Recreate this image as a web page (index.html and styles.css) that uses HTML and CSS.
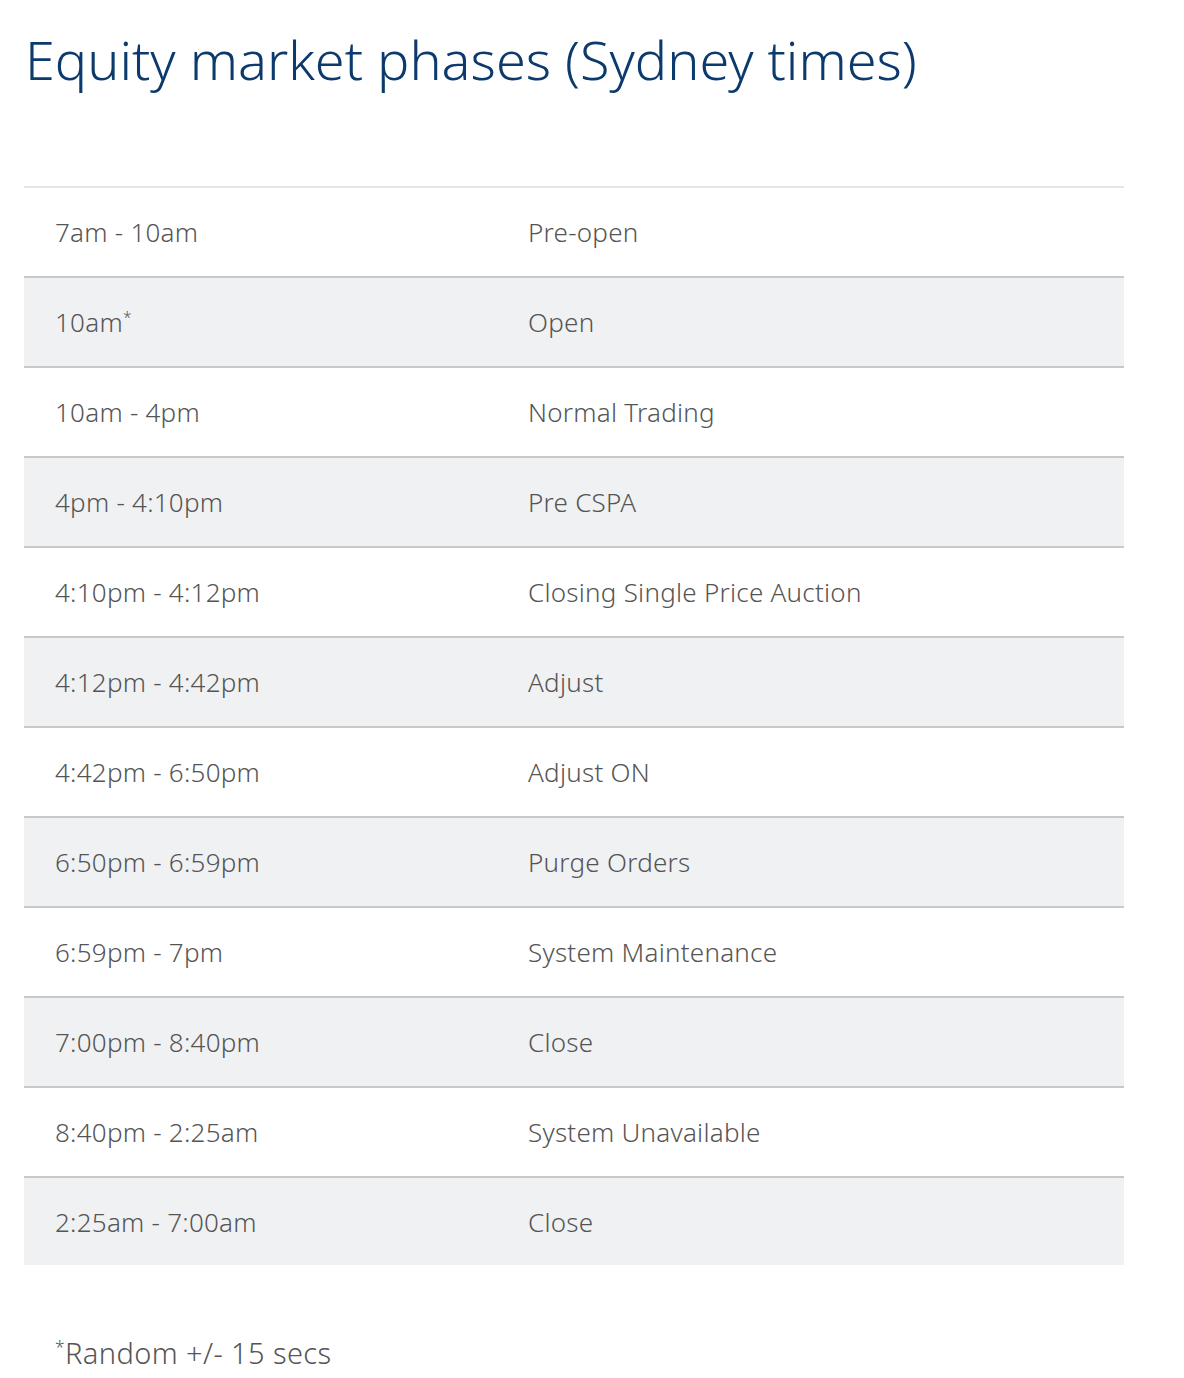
FILE: index.html
```html
<!DOCTYPE html>
<html lang="en">
<head>
<meta charset="utf-8">
<title>Equity market phases</title>
<link rel="stylesheet" href="styles.css">
</head>
<body>
<main class="page">
  <h1 class="title">Equity market phases (Sydney times)</h1>
  <div class="table">
    <div class="row"><div class="cell">7am - 10am</div><div class="cell">Pre-open</div></div>
    <div class="row alt"><div class="cell">10am<sup>*</sup></div><div class="cell">Open</div></div>
    <div class="row"><div class="cell">10am - 4pm</div><div class="cell">Normal Trading</div></div>
    <div class="row alt"><div class="cell">4pm - 4:10pm</div><div class="cell">Pre CSPA</div></div>
    <div class="row"><div class="cell">4:10pm - 4:12pm</div><div class="cell">Closing Single Price Auction</div></div>
    <div class="row alt"><div class="cell">4:12pm - 4:42pm</div><div class="cell">Adjust</div></div>
    <div class="row"><div class="cell">4:42pm - 6:50pm</div><div class="cell">Adjust ON</div></div>
    <div class="row alt"><div class="cell">6:50pm - 6:59pm</div><div class="cell">Purge Orders</div></div>
    <div class="row"><div class="cell">6:59pm - 7pm</div><div class="cell">System Maintenance</div></div>
    <div class="row alt"><div class="cell">7:00pm - 8:40pm</div><div class="cell">Close</div></div>
    <div class="row"><div class="cell">8:40pm - 2:25am</div><div class="cell">System Unavailable</div></div>
    <div class="row alt last"><div class="cell">2:25am - 7:00am</div><div class="cell">Close</div></div>
  </div>
  <p class="note"><sup>*</sup>Random +/- 15 secs</p>
</main>
</body>
</html>
```
FILE: styles.css
```css
html, body {
  margin: 0;
  padding: 0;
  background: #ffffff;
}
.page {
  padding: 0 60px 0 24px;
  font-family: "Noto Sans", "Open Sans", sans-serif;
  color: #555555;
}
.title {
  margin: 0;
  padding-top: 21px;
  padding-left: 1px;
  font-size: 54px;
  font-weight: 350;
  line-height: 76px;
  letter-spacing: 0;
  color: #0c3a6c;
}
.table {
  margin-top: 89px;
  width: 1100px;
  border-top: 2px solid #e5e5e5;
}
.row {
  display: grid;
  grid-template-columns: 473px 1fr;
  height: 88px;
  align-items: center;
  font-size: 26px;
  font-weight: 350;
  line-height: 36px;
  letter-spacing: 0.25px;
}
.row + .row {
  border-top: 2px solid #c9c9c9;
}
.row.alt {
  background: #f0f1f3;
}
.row.last {
  height: 87px;
}
.cell {
  padding-left: 31px;
}
.cell sup, .note sup {
  font-size: 0.6em;
  line-height: 0;
  vertical-align: 0.55em;
}
.note {
  margin: 70px 0 0;
  padding-left: 31px;
  font-size: 29px;
  font-weight: 350;
  line-height: 36px;
  letter-spacing: 0.4px;
}
```
